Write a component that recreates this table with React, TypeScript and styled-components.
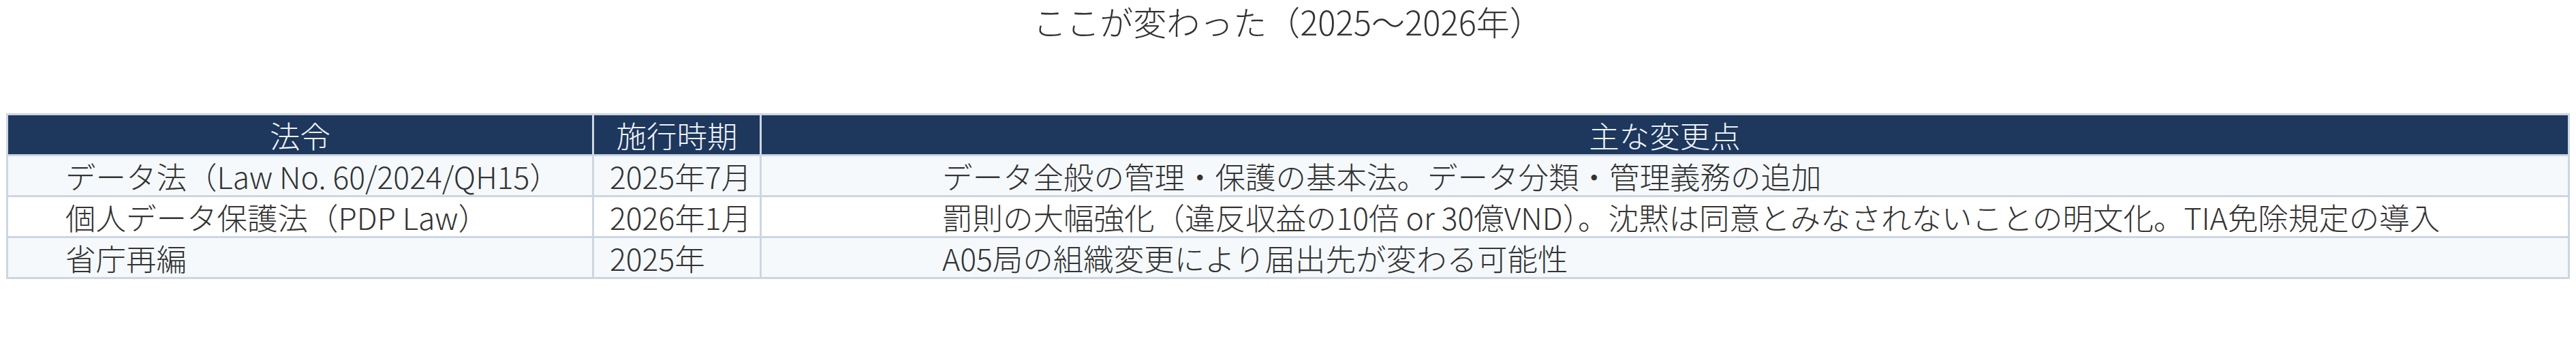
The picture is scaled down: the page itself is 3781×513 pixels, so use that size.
import React from "react";
import styled, { createGlobalStyle } from "styled-components";

const GlobalStyle = createGlobalStyle`
  html, body {
    margin: 0;
    padding: 0;
    background: #ffffff;
  }
  body {
    font-family: "Noto Sans CJK JP", "Noto Sans", sans-serif;
    font-weight: 300;
    color: #333333;
  }
`;

const Page = styled.div`
  padding: 0 9px;
`;

const Title = styled.h1`
  margin: 0 0 104px;
  font-size: 49px;
  font-weight: 300;
  line-height: 62px;
  text-align: center;
  color: #333333;
`;

const Grid = styled.div`
  display: grid;
  grid-template-columns: 860px 246px 1fr;
  border-top: 3px solid #cdd6e1;
  border-left: 3px solid #cdd6e1;
`;

const Cell = styled.div<{ $head?: boolean; $alt?: boolean; $pad?: number }>`
  box-sizing: border-box;
  height: 60px;
  border-right: 3px solid #cdd6e1;
  border-bottom: 3px solid #cdd6e1;
  background: ${(p) => (p.$head ? "#1e375d" : p.$alt ? "#f5f9fc" : "#ffffff")};
  color: ${(p) => (p.$head ? "#eef2f7" : "#333333")};
  font-size: 44.5px;
  font-weight: 300;
  line-height: 57px;
  white-space: nowrap;
  text-align: ${(p) => (p.$head ? "center" : "left")};
  padding-left: ${(p) => (p.$head ? 0 : p.$pad ?? 0)}px;
`;

const headers = ["法令", "施行時期", "主な変更点"];
const pads = [84, 23, 265];

const rows: string[][] = [
  ["データ法（Law No. 60/2024/QH15）", "2025年7月", "データ全般の管理・保護の基本法。データ分類・管理義務の追加"],
  ["個人データ保護法（PDP Law）", "2026年1月", "罰則の大幅強化（違反収益の10倍 or 30億VND）。沈黙は同意とみなされないことの明文化。TIA免除規定の導入"],
  ["省庁再編", "2025年", "A05局の組織変更により届出先が変わる可能性"],
];

export default function App() {
  return (
    <>
      <GlobalStyle />
      <Page>
        <Title>ここが変わった（2025〜2026年）</Title>
        <Grid>
          {headers.map((h) => (
            <Cell key={h} $head>
              {h}
            </Cell>
          ))}
          {rows.map((r, i) =>
            r.map((c, j) => (
              <Cell key={`${i}-${j}`} $alt={i % 2 === 0} $pad={pads[j]}>
                {c}
              </Cell>
            ))
          )}
        </Grid>
      </Page>
    </>
  );
}
